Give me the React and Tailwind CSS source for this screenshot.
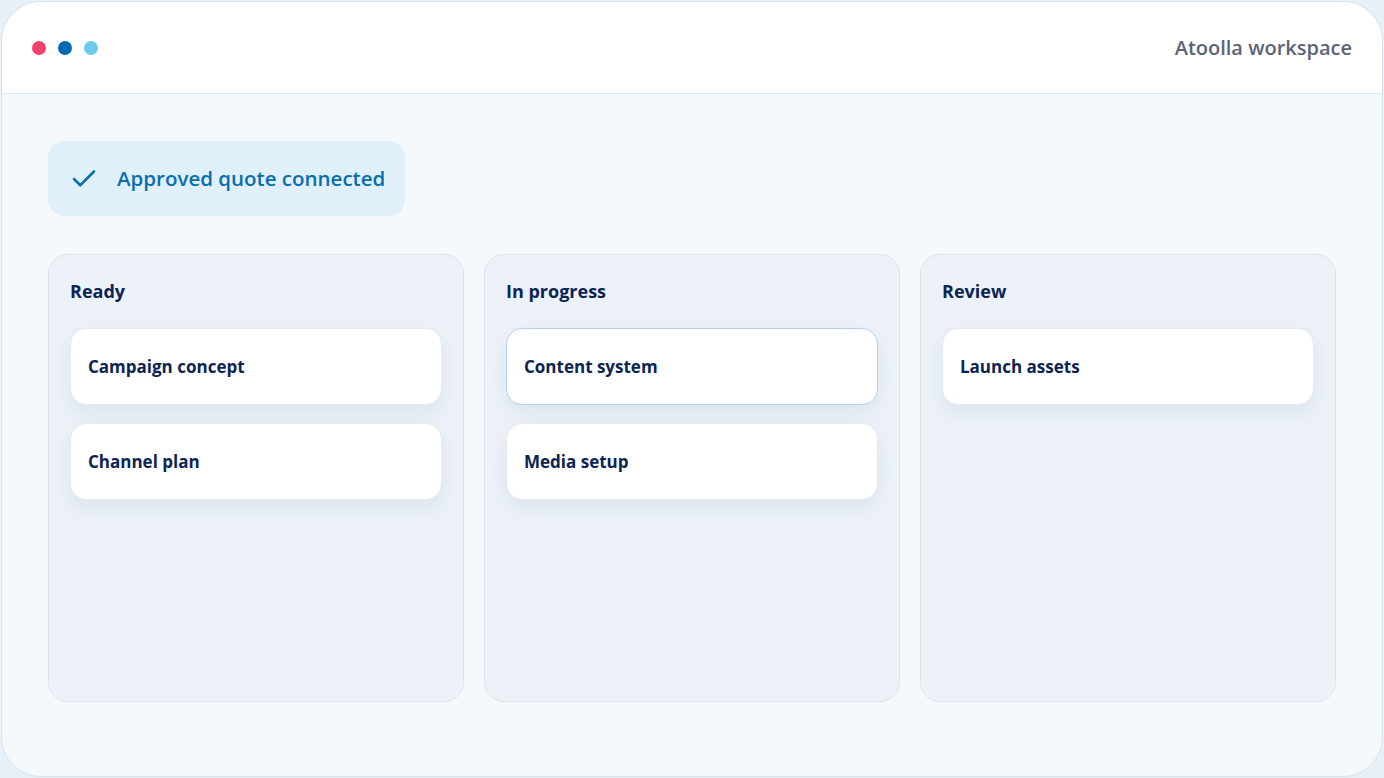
import { Check } from 'lucide-react'

const COLUMNS = [
  { title: 'Ready', cards: [{ name: 'Campaign concept' }, { name: 'Channel plan' }] },
  { title: 'In progress', cards: [{ name: 'Content system', active: true }, { name: 'Media setup' }] },
  { title: 'Review', cards: [{ name: 'Launch assets' }] },
]

function Card({ name, active }) {
  return (
    <div
      className={`h-[77px] flex items-center px-[17px] bg-white rounded-2xl shadow-[0_8px_20px_rgba(30,60,100,0.08)] ${
        active ? 'border-[1.5px] border-[#b3d3ea]' : 'border border-[#e3eaf0]'
      }`}
    >
      <span className="text-[17px] font-bold text-[#0b2454]">{name}</span>
    </div>
  )
}

export default function App() {
  return (
    <div className="h-[778px] w-[1384px] bg-[#e9f1f8] p-[1px] font-['Open_Sans',sans-serif]">
      <div className="h-full rounded-[40px] border border-[#d7e3ec] bg-[#f5f9fc] overflow-hidden flex flex-col">
        <header className="h-[92px] shrink-0 bg-white border-b border-[#dbe6ee] flex items-center justify-between px-[30px]">
          <div className="flex items-center gap-3">
            <span className="w-[14px] h-[14px] rounded-full bg-[#f4416c]" />
            <span className="w-[14px] h-[14px] rounded-full bg-[#0568b3]" />
            <span className="w-[14px] h-[14px] rounded-full bg-[#6ccbe9]" />
          </div>
          <span className="text-[20px] font-semibold text-[#5a6478]">Atoolla workspace</span>
        </header>

        <main className="px-[46px] pt-[47px]">
          <div className="inline-flex items-center gap-[18px] h-[75px] pl-[21px] pr-[20px] rounded-2xl bg-[#dff0fa] text-[#0a6dae]">
            <Check className="w-[30px] h-[30px]" strokeWidth={2} />
            <span className="text-[20.5px] font-semibold">Approved quote connected</span>
          </div>

          <div className="mt-[38px] grid grid-cols-3 gap-[20px]">
            {COLUMNS.map(col => (
              <section
                key={col.title}
                className="h-[448px] rounded-[20px] border border-[#dbe4ec] bg-[#edf2f8] px-[21px] pt-[23px]"
              >
                <h2 className="text-[18px] font-bold text-[#0b2454] leading-[26px]">{col.title}</h2>
                <div className="mt-[24px] flex flex-col gap-[18px]">
                  {col.cards.map(c => (
                    <Card key={c.name} {...c} />
                  ))}
                </div>
              </section>
            ))}
          </div>
        </main>
      </div>
    </div>
  )
}
